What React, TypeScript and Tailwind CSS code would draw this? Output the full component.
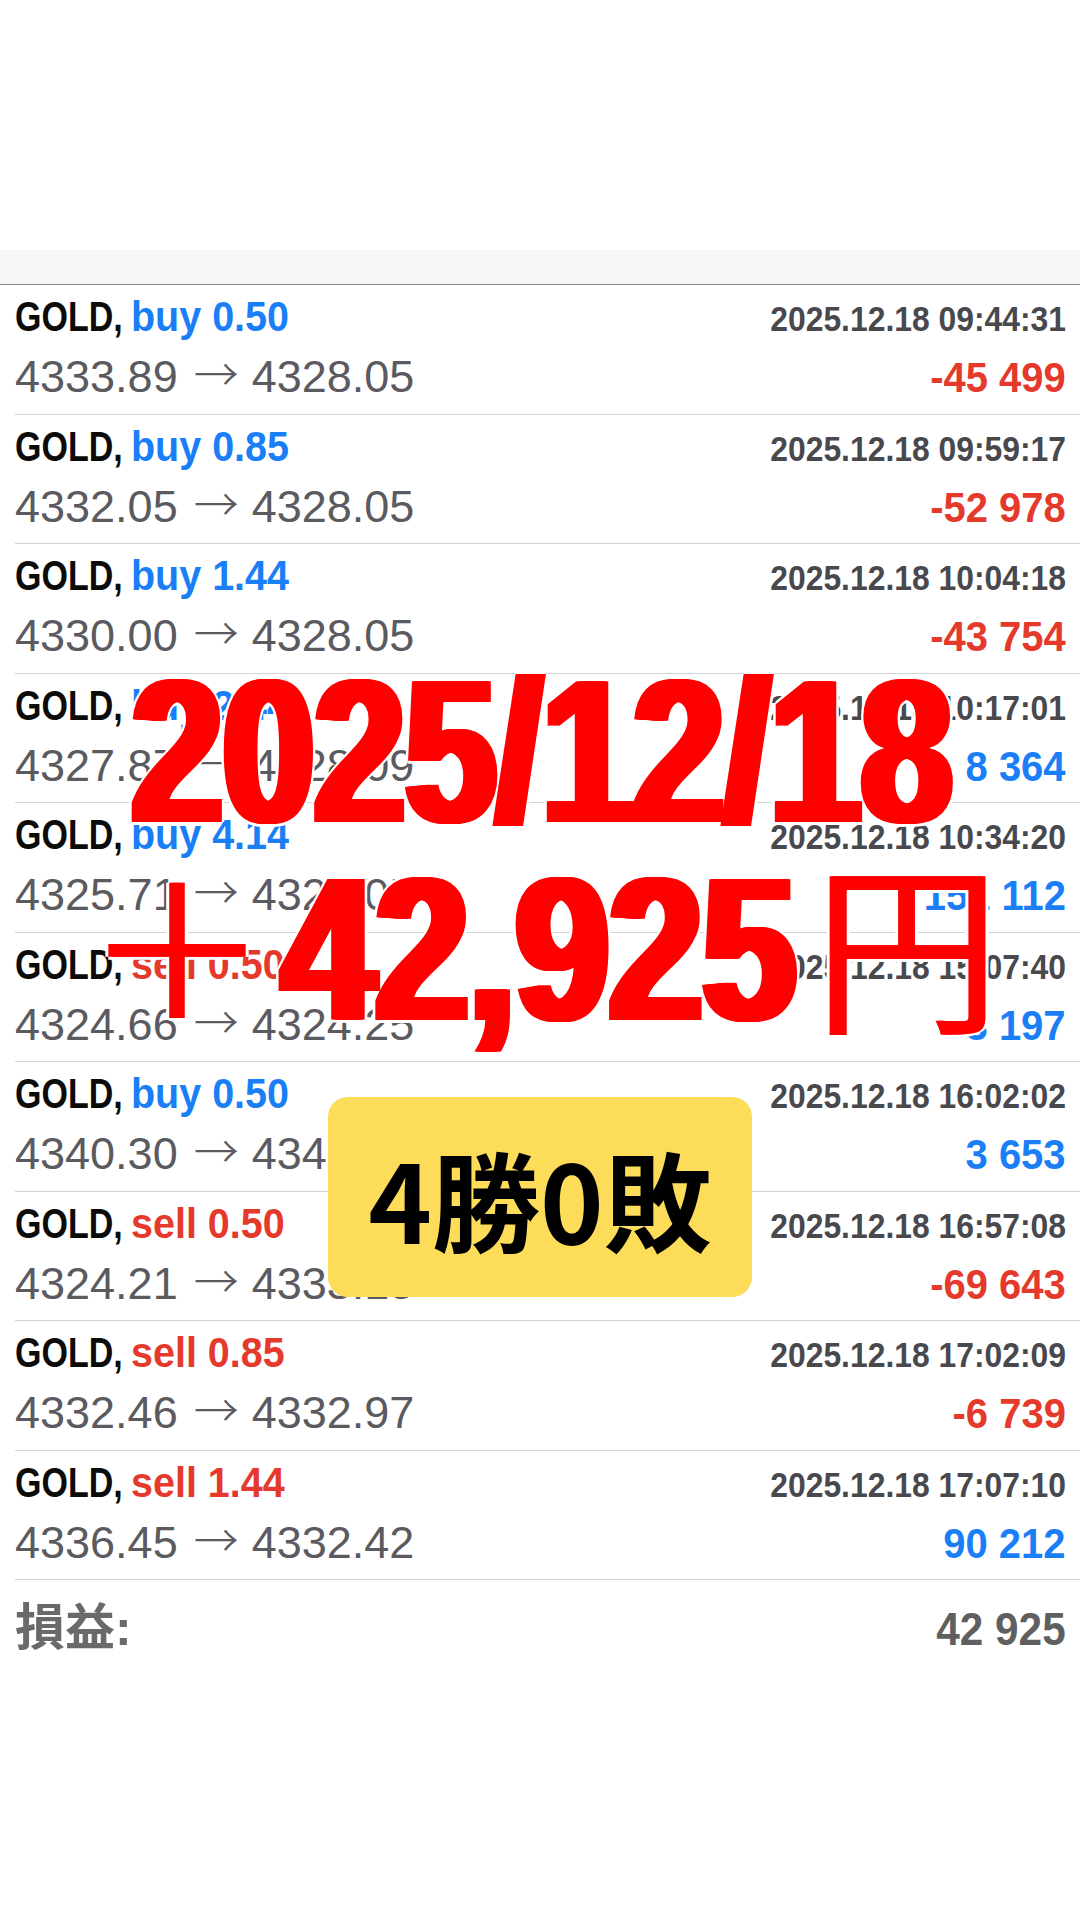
import React from "react";

type Trade = {
  side: "buy" | "sell";
  lot: string;
  time: string;
  open: string;
  close: string;
  profit: string;
};

const trades: Trade[] = [
  { side: "buy", lot: "0.50", time: "2025.12.18 09:44:31", open: "4333.89", close: "4328.05", profit: "-45 499" },
  { side: "buy", lot: "0.85", time: "2025.12.18 09:59:17", open: "4332.05", close: "4328.05", profit: "-52 978" },
  { side: "buy", lot: "1.44", time: "2025.12.18 10:04:18", open: "4330.00", close: "4328.05", profit: "-43 754" },
  { side: "buy", lot: "2.44", time: "2025.12.18 10:17:01", open: "4327.87", close: "4328.09", profit: "8 364" },
  { side: "buy", lot: "4.14", time: "2025.12.18 10:34:20", open: "4325.71", close: "4328.05", profit: "151 112" },
  { side: "sell", lot: "0.50", time: "2025.12.18 15:07:40", open: "4324.66", close: "4324.25", profit: "3 197" },
  { side: "buy", lot: "0.50", time: "2025.12.18 16:02:02", open: "4340.30", close: "4340.77", profit: "3 653" },
  { side: "sell", lot: "0.50", time: "2025.12.18 16:57:08", open: "4324.21", close: "4333.15", profit: "-69 643" },
  { side: "sell", lot: "0.85", time: "2025.12.18 17:02:09", open: "4332.46", close: "4332.97", profit: "-6 739" },
  { side: "sell", lot: "1.44", time: "2025.12.18 17:07:10", open: "4336.45", close: "4332.42", profit: "90 212" },
];

function Row({ t }: { t: Trade }) {
  const sideColor = t.side === "buy" ? "text-[#1a7ff6]" : "text-[#e5392b]";
  const profitColor = t.profit.startsWith("-") ? "text-[#e5392b]" : "text-[#1a7ff6]";
  return (
    <div className="ml-[15px] h-[129.5px] border-b border-[#d3d3d3] pr-[14px]">
      <div className="flex items-baseline justify-between pt-[8px]">
        <div className="flex items-baseline">
          <div className="flex w-[116px] shrink-0 text-[42px] leading-[48px] font-bold text-[#0b0b0b]">
            <span className="shrink-0 origin-left scale-x-[0.81] whitespace-nowrap">GOLD,</span>
          </div>
          <div className={`flex text-[42px] leading-[48px] font-bold ${sideColor}`}>
            <span className="shrink-0 origin-left scale-x-[0.94] whitespace-nowrap">
              {t.side} {t.lot}
            </span>
          </div>
        </div>
        <div className="flex w-[340px] justify-end text-[35px] leading-[48px] font-bold text-[#48484d]">
          <span className="shrink-0 origin-right scale-x-[0.91] whitespace-nowrap">{t.time}</span>
        </div>
      </div>
      <div className="mt-[10px] flex items-baseline justify-between">
        <div className="whitespace-nowrap text-[45px] leading-[48px] text-[#5a5a5f]">
          {t.open}
          <span className="ml-[16px] mr-[13px] font-['Noto_Sans_CJK_JP',sans-serif] text-[45px] leading-[0] font-light">→</span>
          {t.close}
        </div>
        <div className={`flex w-[240px] justify-end text-[43px] leading-[48px] font-bold ${profitColor}`}>
          <span className="shrink-0 origin-right scale-x-[0.93] whitespace-nowrap">{t.profit}</span>
        </div>
      </div>
    </div>
  );
}

export default function App() {
  return (
    <div className="relative h-[1920px] w-[1080px] overflow-hidden bg-white font-['Liberation_Sans','Noto_Sans_CJK_JP',sans-serif]">
      <div className="h-[250px]" />
      <div className="h-[35px] border-b border-[#8a8a8a] bg-[#f6f6f6]" />
      <div>
        {trades.map((t, i) => (
          <Row key={i} t={t} />
        ))}
      </div>
      <div className="ml-[15px] flex h-[90px] items-baseline justify-between pr-[14px] pt-[18px]">
        <span className="text-[50px] leading-[60px] font-bold text-[#6a6a6a]">損益:</span>
        <div className="flex w-[240px] justify-end text-[46px] leading-[60px] font-bold text-[#5f5f5f]">
          <span className="shrink-0 origin-right scale-x-[0.92] whitespace-nowrap">42 925</span>
        </div>
      </div>

      {/* Big overlay: date */}
      <div className="absolute left-[126px] top-[648px] flex">
        <span className="shrink-0 origin-left scale-x-[0.8] whitespace-nowrap text-[205px] leading-[205px] font-bold text-[#fe0000] [text-shadow:2px_0_0_#fe0000,4px_0_0_#fe0000,6px_0_0_#fe0000,8px_0_0_#fe0000,10px_0_0_#fe0000,12px_0_0_#fe0000,14px_0_0_#fe0000,-3px_0_0_#fff,17px_0_0_#fff,0_3px_0_#fff,0_-3px_0_#fff,7px_3px_0_#fff,7px_-3px_0_#fff,14px_3px_0_#fff,14px_-3px_0_#fff]">
          2025/12/18
        </span>
      </div>

      {/* Big overlay: amount */}
      <div className="absolute left-[83px] top-[837px] flex items-baseline">
        <span className="shrink-0 font-['Noto_Sans_CJK_JP',sans-serif] text-[185px] leading-[205px] font-normal text-[#fe0000] [text-shadow:3px_0_0_#fe0000,-3px_0_0_#fff,6px_0_0_#fff,0_3px_0_#fff,0_-3px_0_#fff]">
          ＋
        </span>
        <div className="ml-[8px] flex w-[537px] shrink-0 text-[205px] leading-[205px] font-bold text-[#fe0000]">
          <span className="shrink-0 origin-left scale-x-[0.82] whitespace-nowrap [text-shadow:2px_0_0_#fe0000,4px_0_0_#fe0000,6px_0_0_#fe0000,8px_0_0_#fe0000,10px_0_0_#fe0000,12px_0_0_#fe0000,14px_0_0_#fe0000,-3px_0_0_#fff,17px_0_0_#fff,0_3px_0_#fff,0_-3px_0_#fff,7px_3px_0_#fff,7px_-3px_0_#fff,14px_3px_0_#fff,14px_-3px_0_#fff]">
            42,925
          </span>
        </div>
        <span className="shrink-0 font-['Noto_Sans_CJK_JP',sans-serif] text-[185px] leading-[205px] font-normal text-[#fe0000] [text-shadow:3px_0_0_#fe0000,-3px_0_0_#fff,6px_0_0_#fff,0_3px_0_#fff,0_-3px_0_#fff]">
          円
        </span>
      </div>

      {/* Yellow badge */}
      <div className="absolute left-[328px] top-[1097px] flex h-[200px] w-[424px] items-center justify-center rounded-[20px] bg-[#fddc5a]">
        <span className="font-['Noto_Sans_CJK_JP',sans-serif] text-[108px] leading-[108px] font-bold text-black">
          4勝0敗
        </span>
      </div>
    </div>
  );
}
